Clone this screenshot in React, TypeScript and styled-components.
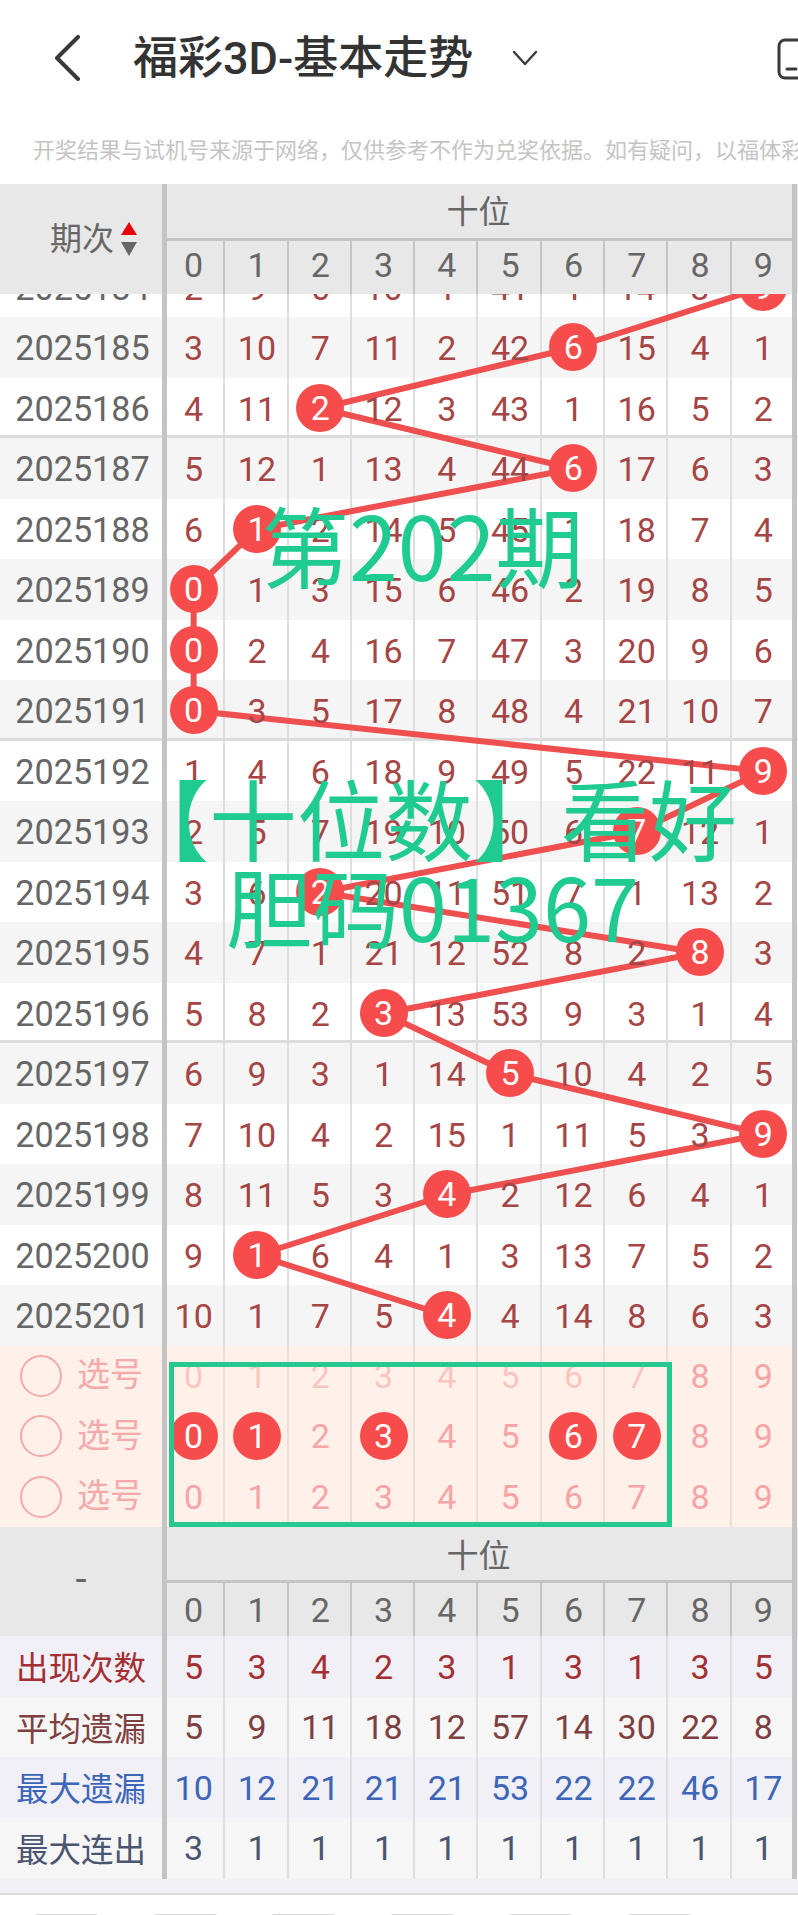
import React from 'react';
import styled, { createGlobalStyle, css } from 'styled-components';

const GlobalStyle = createGlobalStyle`
    html, body {
        margin: 0;
        padding: 0;
        background: #fff;
    }

    * { box-sizing: border-box; }
`;

const fontStack = `Roboto, "Noto Sans CJK SC", sans-serif`;
const ROW_HEIGHT = 60.5;
const LEFT_WIDTH = 162;
const COL_WIDTH = 63.3;

const Page = styled.div`
    position: relative;
    width: 798px;
    height: 1915px;
    overflow: hidden;
    background: #fff;
    font-family: ${ fontStack };
`;

const Header = styled.header`
    display: flex;
    align-items: center;
    height: 116px;
    padding-left: 55px;
    overflow: hidden;
`;

const Title = styled.h1`
    margin: 0 0 0 52px;
    font-size: 45px;
    font-weight: 500;
    line-height: 1;
    color: #333;
    white-space: nowrap;
`;

const IconSlot = styled.svg`
    flex: none;
    display: block;
    fill: none;
    stroke: #3a3a3a;
    stroke-linecap: round;
    stroke-linejoin: round;
`;

const TitleCaret = styled(IconSlot)`
    margin-left: 39px;
`;

const DeviceIcon = styled(IconSlot)`
    margin-left: auto;
    margin-right: -8px;
    margin-top: 2px;
`;

const Notice = styled.p`
    margin: 0;
    height: 68px;
    padding: 0 0 4px 33px;
    display: flex;
    align-items: center;
    font-size: 22px;
    color: #c4c4c4;
    white-space: nowrap;
    overflow: hidden;
`;

const Strip = styled.div<{ $height: number; $bg?: string; $sep?: boolean }>`
    display: flex;
    width: 100%;
    height: ${ p => p.$height }px;
    background: ${ p => p.$bg || 'transparent' };
    ${ p => p.$sep && css`box-shadow: inset 0 -3px 0 #dcdcdc;` }
`;

const LeftCell = styled.div<{ $color?: string; $size?: number; $lift?: number }>`
    flex: 0 0 ${ LEFT_WIDTH }px;
    display: flex;
    align-items: center;
    justify-content: center;
    padding-bottom: ${ p => p.$lift || 0 }px;
    font-size: ${ p => p.$size || 34 }px;
    color: ${ p => p.$color || '#666' };
`;

const PeriodCell = styled(LeftCell)`
    padding: 2px 0 0 3px;
    font-size: 34.2px;
`;

const NumberGrid = styled.div`
    display: grid;
    grid-template-columns: repeat(10, ${ COL_WIDTH }px);
    width: ${ COL_WIDTH * 10 }px;
`;

const NumberCell = styled.div<{ $line: string; $color?: string; $lift?: number }>`
    display: flex;
    align-items: center;
    justify-content: center;
    padding-bottom: ${ p => p.$lift || 0 }px;
    font-size: 34px;
    color: ${ p => p.$color || '#a54545' };
    box-shadow: inset -2px 0 0 ${ p => p.$line };

    &:first-child {
        box-shadow: inset 5px 0 0 #c4c4c4, inset -2px 0 0 ${ p => p.$line };
    }

    &:last-child {
        box-shadow: inset -3px 0 0 #c4c4c4, 2px 0 0 #c4c4c4;
    }
`;

const Digit = styled.span`
    position: relative;
    z-index: 2;
    padding-top: 2px;
`;

const Ball = styled.span`
    position: relative;
    z-index: 2;
    width: 48px;
    height: 48px;
    border-radius: 50%;
    display: flex;
    align-items: center;
    justify-content: center;
    background: #f64c4c;
    color: #fff;
`;

const HeadBlock = styled.div<{ $height: number }>`
    display: flex;
    height: ${ p => p.$height }px;
    background: #e8e8e8;
`;

const HeadRight = styled.div`
    width: ${ COL_WIDTH * 10 }px;
    display: flex;
    flex-direction: column;
`;

const GroupTitle = styled.div<{ $lift: number }>`
    flex: 1;
    display: flex;
    align-items: center;
    justify-content: center;
    padding-bottom: ${ p => p.$lift }px;
    font-size: 32px;
    color: #666;
    box-shadow: inset 5px 0 0 #c4c4c4, inset -3px 0 0 #c4c4c4, 2px 0 0 #c4c4c4, inset 0 -3px 0 #c4c4c4;
`;

const HeadDigits = styled(NumberGrid)`
    height: 53px;
`;

const SortLabel = styled.span`
    font-size: 32px;
    line-height: 1;
    margin-left: 25px;
`;

const SortArrows = styled.svg`
    display: block;
    margin-left: 7px;
    flex: none;
`;

const Viewport = styled.div`
    height: ${ ROW_HEIGHT * 17 + 23 }px;
    overflow: hidden;
`;

const RowsInner = styled.div`
    position: relative;
    margin-top: -${ ROW_HEIGHT - 23 }px;
`;

const TrendLine = styled.svg`
    position: absolute;
    top: 0;
    left: 0;
    z-index: 1;
    overflow: visible;
    fill: none;
    stroke: #f04f4f;
    stroke-width: 6;
    stroke-linejoin: round;
`;

const PickBlock = styled.div`
    position: relative;
    background: #fff0ea;
`;

const PickLeft = styled.div`
    flex: 0 0 ${ LEFT_WIDTH }px;
    display: flex;
    align-items: center;
    padding-left: 20px;
    font-size: 33px;
    color: #f5a9a9;
`;

const PickRing = styled.span`
    width: 42px;
    height: 42px;
    border: 2px solid #f5a9a9;
    border-radius: 50%;
    margin-right: 15px;
    flex: none;
`;

const PickLabel = styled.span`
    line-height: 1;
    padding-bottom: 2px;
`;

const PickFrame = styled.div`
    position: absolute;
    left: 169px;
    top: 16px;
    width: 503px;
    bottom: 0;
    border: 5px solid #25c990;
    z-index: 3;
`;

const FooterGap = styled.div`
    height: 16px;
    background: #f0f0f5;
    border-bottom: 2px solid #dcdcdc;
`;

const BottomBar = styled.div`
    display: flex;
    gap: 55.5px;
    padding: 19px 0 0 35px;
`;

const BottomMark = styled.span`
    width: 63px;
    height: 2px;
    background: #d8d8d8;
    border-radius: 3px 3px 0 0;
`;

const Watermark = styled.div<{ $top: number; $left: number; $size: number }>`
    position: absolute;
    top: ${ p => p.$top }px;
    left: ${ p => p.$left }px;
    z-index: 5;
    font-family: "Noto Sans CJK SC", sans-serif;
    font-size: ${ p => p.$size }px;
    line-height: 100px;
    color: #1fcb90;
    white-space: nowrap;
`;

const digits = [0, 1, 2, 3, 4, 5, 6, 7, 8, 9];

// [period, values, column of the drawn number]
const rows: [string, number[], number][] = [
    ['2025184', [2, 9, 6, 10, 1, 41, 1, 14, 3, 9], 9],
    ['2025185', [3, 10, 7, 11, 2, 42, 6, 15, 4, 1], 6],
    ['2025186', [4, 11, 2, 12, 3, 43, 1, 16, 5, 2], 2],
    ['2025187', [5, 12, 1, 13, 4, 44, 6, 17, 6, 3], 6],
    ['2025188', [6, 1, 2, 14, 5, 45, 1, 18, 7, 4], 1],
    ['2025189', [0, 1, 3, 15, 6, 46, 2, 19, 8, 5], 0],
    ['2025190', [0, 2, 4, 16, 7, 47, 3, 20, 9, 6], 0],
    ['2025191', [0, 3, 5, 17, 8, 48, 4, 21, 10, 7], 0],
    ['2025192', [1, 4, 6, 18, 9, 49, 5, 22, 11, 9], 9],
    ['2025193', [2, 5, 7, 19, 10, 50, 6, 7, 12, 1], 7],
    ['2025194', [3, 6, 2, 20, 11, 51, 7, 1, 13, 2], 2],
    ['2025195', [4, 7, 1, 21, 12, 52, 8, 2, 8, 3], 8],
    ['2025196', [5, 8, 2, 3, 13, 53, 9, 3, 1, 4], 3],
    ['2025197', [6, 9, 3, 1, 14, 5, 10, 4, 2, 5], 5],
    ['2025198', [7, 10, 4, 2, 15, 1, 11, 5, 3, 9], 9],
    ['2025199', [8, 11, 5, 3, 4, 2, 12, 6, 4, 1], 4],
    ['2025200', [9, 1, 6, 4, 1, 3, 13, 7, 5, 2], 1],
    ['2025201', [10, 1, 7, 5, 4, 4, 14, 8, 6, 3], 4],
];

const stats = [
    { label: '出现次数', values: [5, 3, 4, 2, 3, 1, 3, 1, 3, 5], color: '#a32f33', bg: '#f0f0f6' },
    { label: '平均遗漏', values: [5, 9, 11, 18, 12, 57, 14, 30, 22, 8], color: '#7d3f40', bg: '#f6f6f6' },
    { label: '最大遗漏', values: [10, 12, 21, 21, 21, 53, 22, 22, 46, 17], color: '#3d66b8', bg: '#f0f0f6' },
    { label: '最大连出', values: [3, 1, 1, 1, 1, 1, 1, 1, 1, 1], color: '#4a5570', bg: '#f6f6f6' },
];

const picked = [0, 1, 3, 6, 7];

const trendPoints = rows
    .map(([, , col], i) => `${ LEFT_WIDTH + COL_WIDTH * (col + 0.5) },${ ROW_HEIGHT * (i + 0.5) }`)
    .join(' ');

const HeadNumbers = ({ lift }: { lift?: number }) => (
    <HeadDigits>
        { digits.map(d => <NumberCell key={ d } $line="#c4c4c4" $color="#666" $lift={ lift }>{ d }</NumberCell>) }
    </HeadDigits>
);

export default function App() {
    return (
        <Page>
            <GlobalStyle />
            <Header>
                <IconSlot width="26" height="46" viewBox="0 0 26 46" strokeWidth="4">
                    <path d="M23 2 L2 23 L23 44" />
                </IconSlot>
                <Title>福彩3D-基本走势</Title>
                <TitleCaret width="26" height="16" viewBox="0 0 26 16" strokeWidth="2.4">
                    <path d="M2 2 L13 14 L24 2" />
                </TitleCaret>
                <DeviceIcon width="29" height="42" viewBox="0 0 29 42" strokeWidth="3">
                    <rect x="2" y="2" width="40" height="38" rx="6" />
                    <path d="M10 31 H19" />
                </DeviceIcon>
            </Header>

            <Notice>开奖结果与试机号来源于网络，仅供参考不作为兑奖依据。如有疑问，以福体彩官方公布为准</Notice>

            <HeadBlock $height={ 110 }>
                <LeftCell>
                    <SortLabel>期次</SortLabel>
                    <SortArrows width="16" height="34" viewBox="0 0 16 34">
                        <polygon points="8,0 16,13 0,13" fill="#e8000b" />
                        <polygon points="0,20 16,20 8,34" fill="#666" />
                    </SortArrows>
                </LeftCell>
                <HeadRight>
                    <GroupTitle $lift={ 8 }>十位</GroupTitle>
                    <HeadNumbers lift={ 6 } />
                </HeadRight>
            </HeadBlock>

            <Viewport>
                <RowsInner>
                    <TrendLine width="798" height={ ROW_HEIGHT * rows.length }>
                        <polyline points={ trendPoints } />
                    </TrendLine>
                    { rows.map(([period, values, col], i) => (
                        <Strip
                            key={ period }
                            $height={ ROW_HEIGHT }
                            $bg={ i % 2 === 1 ? '#f5f5f5' : '#fff' }
                            $sep={ i === 2 || i === 7 || i === 12 }
                        >
                            <PeriodCell>{ period }</PeriodCell>
                            <NumberGrid>
                                { values.map((v, c) => (
                                    <NumberCell key={ c } $line="#dedede">
                                        { c === col ? <Ball>{ v }</Ball> : <Digit>{ v }</Digit> }
                                    </NumberCell>
                                )) }
                            </NumberGrid>
                        </Strip>
                    )) }
                </RowsInner>
            </Viewport>

            <PickBlock>
                { [0, 1, 2].map(row => (
                    <Strip key={ row } $height={ 60.6 }>
                        <PickLeft>
                            <PickRing />
                            <PickLabel>选号</PickLabel>
                        </PickLeft>
                        <NumberGrid>
                            { digits.map(d => (
                                <NumberCell
                                    key={ d }
                                    $line="#e6dfdb"
                                    $color={ row === 0 && d < 8 ? '#f9c6bf' : '#f5a5a5' }
                                >
                                    { row === 1 && picked.includes(d) ? <Ball>{ d }</Ball> : d }
                                </NumberCell>
                            )) }
                        </NumberGrid>
                    </Strip>
                )) }
                <PickFrame />
            </PickBlock>

            <HeadBlock $height={ 109 }>
                <LeftCell $size={ 40 } $lift={ 4 }>-</LeftCell>
                <HeadRight>
                    <GroupTitle $lift={ 5 }>十位</GroupTitle>
                    <HeadNumbers />
                </HeadRight>
            </HeadBlock>

            { stats.map(s => (
                <Strip key={ s.label } $height={ 60.6 } $bg={ s.bg }>
                    <LeftCell $color={ s.color } $size={ 32.5 } $lift={ 2 }>{ s.label }</LeftCell>
                    <NumberGrid>
                        { s.values.map((v, c) => (
                            <NumberCell key={ c } $line="#dedede" $color={ s.color }>{ v }</NumberCell>
                        )) }
                    </NumberGrid>
                </Strip>
            )) }

            <FooterGap />
            <BottomBar>
                { [0, 1, 2, 3, 4, 5].map(i => <BottomMark key={ i } />) }
            </BottomBar>

            <Watermark $top={ 493 } $left={ 261 } $size={ 88 }>第202期</Watermark>
            <Watermark $top={ 766 } $left={ 121 } $size={ 88 }>【十位数】看好</Watermark>
            <Watermark $top={ 855 } $left={ 226 } $size={ 86.5 }>胆码01367</Watermark>
        </Page>
    );
}
